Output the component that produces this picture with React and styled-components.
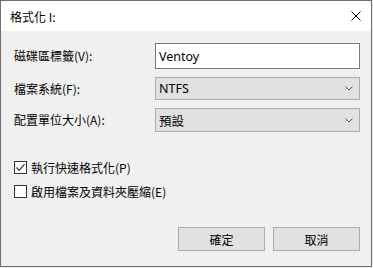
import React from "react";
import styled, { createGlobalStyle } from "styled-components";

const Global = createGlobalStyle`
  html, body { margin: 0; padding: 0; background: #e9e9e9; }
  body { font-family: "Segoe UI", "Noto Sans", "Noto Sans CJK TC", sans-serif; font-size: 12px; color: #000; }
`;

const Win = styled.div`
  box-sizing: border-box;
  width: 372px;
  height: 267px;
  border: 1px solid #6f6f6f;
  background: #f0f0f0;
  display: flex;
  flex-direction: column;
`;

const TitleBar = styled.div`
  height: 30px;
  background: #fff;
  display: flex;
  align-items: center;
  justify-content: space-between;
  padding: 0 9px 0 9px;
  flex-shrink: 0;
`;

const Title = styled.span`
  font-family: "Noto Sans CJK TC", sans-serif;
  font-size: 12px;
  line-height: 1;
  margin-top: 1px;
`;

const Close = styled.svg`
  width: 10px;
  height: 10px;
  margin-right: 1px;
`;

const Body = styled.div`
  flex: 1;
  padding: 12px 11px 0 13px;
  display: flex;
  flex-direction: column;
`;

const Form = styled.div`
  display: grid;
  grid-template-columns: 141px 205px;
  grid-template-rows: 26px 23px 24px;
  row-gap: 8px;
  align-items: center;
`;

const Label = styled.span`
  font-family: "Noto Sans CJK TC", sans-serif;
  font-size: 12px;
  line-height: 1;
`;

const TextInput = styled.div`
  box-sizing: border-box;
  height: 26px;
  border: 1px solid #7a7a7a;
  background: #fff;
  display: flex;
  align-items: center;
  padding-left: 3px;
  font-size: 12.5px;
`;

const Select = styled.div`
  box-sizing: border-box;
  height: ${(p) => p.h}px;
  border: 1px solid #adadad;
  background: #e1e1e1;
  display: flex;
  align-items: center;
  justify-content: space-between;
  padding: 0 6px 0 3px;
  font-size: 12.5px;
  font-family: "Segoe UI", "Noto Sans", "Noto Sans CJK TC", sans-serif;
`;

const Chevron = styled.svg`
  width: 8px;
  height: 5px;
`;

const Checks = styled.div`
  margin-top: 29px;
  display: flex;
  flex-direction: column;
  gap: 11px;
`;

const CheckRow = styled.div`
  display: flex;
  align-items: center;
  gap: 4px;
`;

const Box = styled.div`
  box-sizing: border-box;
  width: 13px;
  height: 13px;
  border: 1px solid #333;
  background: #fff;
  display: flex;
  align-items: center;
  justify-content: center;
`;

const Buttons = styled.div`
  margin-top: 29px;
  display: flex;
  justify-content: flex-end;
  gap: 8px;
`;

const Button = styled.div`
  box-sizing: border-box;
  width: 87px;
  height: 24px;
  border: 1px solid #adadad;
  background: #e1e1e1;
  display: flex;
  align-items: center;
  justify-content: center;
  font-family: "Noto Sans CJK TC", sans-serif;
  font-size: 12px;
`;

const ChevronIcon = () => (
  <Chevron viewBox="0 0 8 5">
    <path d="M0.5 0.5 L4 4 L7.5 0.5" fill="none" stroke="#555" strokeWidth="1" />
  </Chevron>
);

const Check = ({ checked, children }) => (
  <CheckRow>
    <Box>
      {checked && (
        <svg width="11" height="11" viewBox="0 0 11 11">
          <path d="M1.5 5.5 L4.2 8.3 L9.5 2.2" fill="none" stroke="#333" strokeWidth="1.2" />
        </svg>
      )}
    </Box>
    <Label>{children}</Label>
  </CheckRow>
);

export default function App() {
  return (
    <>
      <Global />
      <Win>
        <TitleBar>
          <Title>格式化 I:</Title>
          <Close viewBox="0 0 10 10">
            <path d="M0.5 0.5 L9.5 9.5 M9.5 0.5 L0.5 9.5" stroke="#000" strokeWidth="1" />
          </Close>
        </TitleBar>
        <Body>
          <Form>
            <Label>磁碟區標籤(V):</Label>
            <TextInput>Ventoy</TextInput>
            <Label>檔案系統(F):</Label>
            <Select h={23}>
              <span>NTFS</span>
              <ChevronIcon />
            </Select>
            <Label>配置單位大小(A):</Label>
            <Select h={24}>
              <span>預設</span>
              <ChevronIcon />
            </Select>
          </Form>
          <Checks>
            <Check checked>執行快速格式化(P)</Check>
            <Check>啟用檔案及資料夾壓縮(E)</Check>
          </Checks>
          <Buttons>
            <Button>確定</Button>
            <Button>取消</Button>
          </Buttons>
        </Body>
      </Win>
    </>
  );
}
